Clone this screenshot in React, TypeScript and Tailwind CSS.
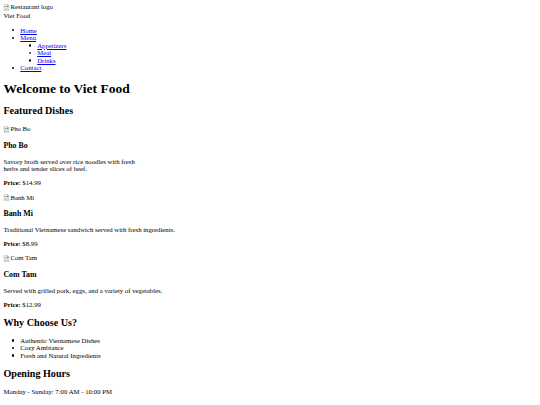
import React from 'react';

// broken-image placeholder: small icon + alt text, like the browser draws it
const BrokenImg: React.FC<{ alt: string }> = ({ alt }) => (
    <span className="inline-flex items-start">
        <svg width="7" height="7" viewBox="0 0 16 16" className="shrink-0 mt-[0.5px]">
            <path d="M2.5 1.5h8l3 3v4l-2 1.5-2-1.5-2 1.5-2-1.5-2 1.5-1-1z" fill="#fff" stroke="#8a8a8a" />
            <path d="M10.5 1.5v3h3" fill="none" stroke="#8a8a8a" />
            <path d="M2.5 11.5l2 1.5 2-1.5 2 1.5 2-1.5 2 1.5 1-0.8v2.3h-11z" fill="#fff" stroke="#8a8a8a" />
            <path d="M4 7l2-2 2 2" fill="none" stroke="#3c9a3c" strokeWidth="2" />
            <rect x="9" y="4" width="3" height="3" fill="#4a7ee0" />
        </svg>
        <span>{alt}</span>
    </span>
);

// list marker, sits in the ul's left padding
const Dot: React.FC<{ hollow?: boolean }> = ({ hollow }) => (
    <span className="-ml-[8.5px] w-[8.5px] shrink-0 flex items-center">
        <span className={hollow
            ? 'ml-[0.4px] w-[2.4px] h-[2.4px] rounded-full border-[0.6px] border-black'
            : 'ml-[0.4px] w-[2.2px] h-[2.2px] rounded-full bg-black'} />
    </span>
);

const dishes = [
    { name: 'Pho Bo', desc: <>Savory broth served over rice noodles with fresh<br />herbs and tender slices of beef.</>, price: '$14.99' },
    { name: 'Banh Mi', desc: <>Traditional Vietnamese sandwich served with fresh ingredients.</>, price: '$8.99' },
    { name: 'Com Tam', desc: <>Served with grilled pork, eggs, and a variety of vegetables.</>, price: '$12.99' },
];

const link = 'text-[#0000ee] underline';
const h2 = 'text-[10.125px] leading-[11.6px] font-bold my-[8.4px]';
const h3 = 'text-[7.9px] leading-[9px] font-bold mt-[6.4px] mb-[7.9px]';

export default function App() {
    return (
        <div className="p-[3.4px] bg-white text-black text-[6.75px] leading-[7.5px] font-['Liberation_Serif',serif] flow-root">
            <header>
                <div><BrokenImg alt="Restaurant logo" /></div>
                <div>Viet Food</div>
                <nav>
                    <ul className="my-[6.75px] pl-[16.9px]">
                        <li className="flex"><Dot /><a href="#" className={link}>Home</a></li>
                        <li>
                            <div className="flex"><Dot /><a href="#" className={link}>Menu</a></div>
                            <ul className="pl-[16.9px]">
                                <li className="flex"><Dot hollow /><a href="#" className={link}>Appetizers</a></li>
                                <li className="flex"><Dot hollow /><a href="#" className={link}>Meal</a></li>
                                <li className="flex"><Dot hollow /><a href="#" className={link}>Drinks</a></li>
                            </ul>
                        </li>
                        <li className="flex"><Dot /><a href="#" className={link}>Contact</a></li>
                    </ul>
                </nav>
            </header>

            <main>
                <h1 className="text-[13.5px] leading-[15.5px] font-bold my-[9.05px]">Welcome to Viet Food</h1>

                <section>
                    <h2 className={h2}>Featured Dishes</h2>
                    {dishes.map((d) => (
                        <div key={d.name}>
                            <div><BrokenImg alt={d.name} /></div>
                            <h3 className={h3}>{d.name}</h3>
                            <p className="my-[6.75px]">{d.desc}</p>
                            <p className="my-[6.75px]"><strong className="font-bold">Price:</strong> {d.price}</p>
                        </div>
                    ))}
                </section>

                <section>
                    <h2 className={h2}>Why Choose Us?</h2>
                    <ul className="my-[6.75px] pl-[16.9px]">
                        <li className="flex"><Dot />Authentic Vietnamese Dishes</li>
                        <li className="flex"><Dot />Cozy Ambiance</li>
                        <li className="flex"><Dot />Fresh and Natural Ingredients</li>
                    </ul>
                </section>

                <section>
                    <h2 className={h2}>Opening Hours</h2>
                    <p className="my-[6.75px]">Monday - Sunday: 7:00 AM - 10:00 PM</p>
                </section>
            </main>
        </div>
    );
}
